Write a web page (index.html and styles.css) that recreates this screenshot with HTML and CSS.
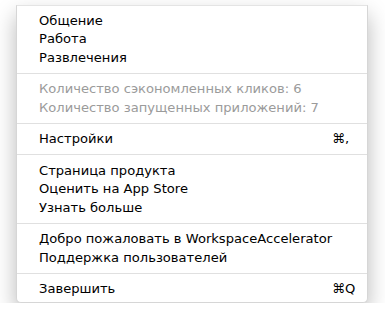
FILE: index.html
```html
<!DOCTYPE html>
<html lang="ru">
<head>
  <meta charset="UTF-8">
  <title>WorkspaceAccelerator</title>
  <link rel="stylesheet" href="styles.css">
</head>
<body>

<div class="menu">
  <div class="item">Общение</div>
  <div class="item">Работа</div>
  <div class="item">Развлечения</div>
  <div class="sep"></div>
  <div class="item disabled">Количество сэкономленных кликов: 6</div>
  <div class="item disabled">Количество запущенных приложений: 7</div>
  <div class="sep"></div>
  <div class="item">Настройки <span class="key">⌘,</span></div>
  <div class="sep"></div>
  <div class="item">Страница продукта</div>
  <div class="item">Оценить на App Store</div>
  <div class="item">Узнать больше</div>
  <div class="sep"></div>
  <div class="item">Добро пожаловать в WorkspaceAccelerator</div>
  <div class="item">Поддержка пользователей</div>
  <div class="sep"></div>
  <div class="item">Завершить <span class="key">⌘Q</span></div>
</div>

</body>
</html>
```

FILE: styles.css
```css
body {
  margin: 0;
  padding: 5px 0 0 16px;
  background: #fff;
  font-family: 'DejaVu Sans', sans-serif;
  font-size: 13.1px;
  color: #000;
}

.menu {
  width: 350px;
  background: #fff;
  border: 1px solid #d6d6d6;
  border-top-color: #e4e4e4;
  border-radius: 0 0 5px 5px;
  box-shadow: 0 10px 22px rgba(0, 0, 0, 0.28);
  padding: 5px 0 4px;
}

.item {
  display: flex;
  justify-content: space-between;
  align-items: center;
  height: 18.5px;
  padding-left: 22px;
  white-space: nowrap;
}

.item.disabled {
  color: #9b9b9b;
}

.key {
  width: 26px;
  margin-right: 9px;
  text-align: left;
}

.sep {
  height: 1px;
  background: #e0e0e0;
  margin: 6px 0;
}
```
